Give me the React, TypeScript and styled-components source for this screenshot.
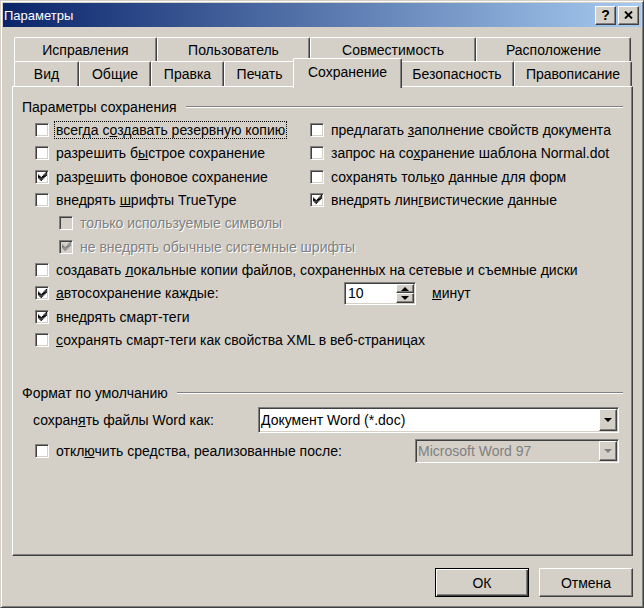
import { FC, ReactNode } from 'react'
import styled, { createGlobalStyle, css } from 'styled-components'

const face = '#d4d0c8'

const GlobalStyle = createGlobalStyle`
  html, body {
    margin: 0;
    padding: 0;
    background: ${face};
  }
  * {
    box-sizing: border-box;
  }
`

const raised = css`
  border: 1px solid;
  border-color: #fff #404040 #404040 #fff;
  box-shadow: inset -1px -1px #808080, inset 1px 1px ${face};
`

const sunken = css`
  border: 1px solid;
  border-color: #808080 #fff #fff #808080;
  box-shadow: inset 1px 1px #404040, inset -1px -1px ${face};
`

const Window = styled.div`
  width: 644px;
  height: 608px;
  background: ${face};
  border: 1px solid;
  border-color: ${face} #404040 #404040 ${face};
  box-shadow: inset 1px 1px #fff, inset -1px -1px #808080;
  padding: 2px;
  display: flex;
  flex-direction: column;
  font-family: 'Liberation Sans', Arial, sans-serif;
  font-size: 14px;
  color: #000;
`

const TitleBar = styled.div`
  height: 24px;
  flex: none;
  display: flex;
  align-items: center;
  padding: 0 2px 0 1px;
  gap: 2px;
  background: linear-gradient(to right, #0a246a, #a6caf0);
`

const Title = styled.div`
  flex: 1;
  color: #fff;
  font-size: 13px;
`

const CaptionButton = styled.div`
  width: 21px;
  height: 19px;
  ${raised};
  background: ${face};
  display: flex;
  align-items: center;
  justify-content: center;
  font-weight: bold;
  font-size: 14px;
`

const Body = styled.div`
  flex: 1;
  display: flex;
  flex-direction: column;
  padding: 10px 0 0 9px;
`

const TabRow = styled.div<{ $h: number }>`
  display: flex;
  height: ${({ $h }) => $h}px;
  margin-left: 2px;
  position: relative;
  z-index: 1;
`

const Tab = styled.div<{ $w: number; $active?: boolean }>`
  width: ${({ $w }) => $w}px;
  height: 100%;
  flex: none;
  display: flex;
  align-items: center;
  justify-content: center;
  background: ${face};
  border-top: 1px solid #fff;
  border-left: 1px solid #fff;
  border-right: 1px solid #404040;
  box-shadow: inset -1px 0 #808080;
  border-radius: 2px 2px 0 0;
  white-space: nowrap;
  ${({ $active }) =>
    $active &&
    css`
      position: relative;
      z-index: 2;
      margin: -3px -2px -2px;
      height: calc(100% + 5px);
      padding-bottom: 3px;
    `}
`

const Panel = styled.div`
  width: 621px;
  height: 470px;
  flex: none;
  border: 1px solid;
  border-color: #fff #404040 #404040 #fff;
  box-shadow: inset -1px -1px #808080;
  padding: 11px 9px 0 9px;
  display: flex;
  flex-direction: column;
`

const GroupHeader = styled.div<{ $top?: number }>`
  display: flex;
  align-items: center;
  height: 17px;
  gap: 9px;
  margin-top: ${({ $top }) => $top ?? 0}px;
  white-space: nowrap;
  &::after {
    content: '';
    flex: 1;
    border-top: 1px solid #808080;
    border-bottom: 1px solid #fff;
  }
`

const TwoCols = styled.div`
  display: grid;
  grid-template-columns: 275px 1fr;
  padding-left: 13px;
  margin-top: 3.3px;
`

const Rows = styled.div`
  display: flex;
  flex-direction: column;
  padding-left: 13px;
`

const Row = styled.div<{ $indent?: number }>`
  display: flex;
  align-items: center;
  height: 23.33px;
  padding-left: ${({ $indent }) => $indent ?? 0}px;
  white-space: nowrap;
`

const CheckWrap = styled.div<{ $w?: number }>`
  display: flex;
  align-items: center;
  gap: 5px;
  ${({ $w }) => $w && `width: ${$w}px; flex: none;`}
`

const Box = styled.span<{ $disabled?: boolean }>`
  width: 14px;
  height: 14px;
  flex: none;
  ${sunken};
  background: ${({ $disabled }) => ($disabled ? face : '#fff')};
  display: flex;
  align-items: center;
  justify-content: center;
`

const Label = styled.span<{ $disabled?: boolean; $focus?: boolean }>`
  padding: 0 1px;
  line-height: 16px;
  border: 1px dotted ${({ $focus }) => ($focus ? '#000' : 'transparent')};
  color: ${({ $disabled }) => ($disabled ? '#808080' : '#000')};
  text-shadow: ${({ $disabled }) => ($disabled ? '1px 1px #fff' : 'none')};
`

const Spin = styled.div`
  width: 72px;
  height: 23px;
  flex: none;
  display: flex;
  ${sunken};
  padding: 1px;
  background: #fff;
`

const SpinValue = styled.div`
  flex: 1;
  display: flex;
  align-items: center;
  padding-left: 2px;
`

const SpinButtons = styled.div`
  width: 18px;
  display: flex;
  flex-direction: column;
`

const SpinButton = styled.div`
  flex: 1;
  ${raised};
  background: ${face};
  display: flex;
  align-items: center;
  justify-content: center;
`

const Unit = styled.span`
  margin-left: 16px;
`

const FormatRow = styled.div<{ $top: number; $h: number; $pad: number }>`
  display: flex;
  align-items: center;
  height: ${({ $h }) => $h}px;
  margin-top: ${({ $top }) => $top}px;
  padding: 0 4px 0 ${({ $pad }) => $pad}px;
  white-space: nowrap;
`

const Combo = styled.div<{ $w: number; $disabled?: boolean }>`
  width: ${({ $w }) => $w}px;
  height: 100%;
  margin-left: auto;
  display: flex;
  ${sunken};
  padding: 1px;
  background: ${({ $disabled }) => ($disabled ? face : '#fff')};
`

const ComboText = styled.div<{ $disabled?: boolean }>`
  flex: 1;
  display: flex;
  align-items: center;
  padding-left: 1px;
  color: ${({ $disabled }) => ($disabled ? '#808080' : '#000')};
`

const DropButton = styled.div`
  width: 18px;
  ${raised};
  background: ${face};
  display: flex;
  align-items: center;
  justify-content: center;
`

const Footer = styled.div`
  width: 621px;
  display: flex;
  justify-content: flex-end;
  gap: 10px;
  margin-top: 12px;
`

const Button = styled.div<{ $default?: boolean }>`
  width: 94px;
  height: 29px;
  display: flex;
  align-items: center;
  justify-content: center;
  background: ${face};
  ${({ $default }) =>
    $default
      ? css`
          border: 1px solid #000;
          box-shadow: inset 1px 1px #fff, inset -1px -1px #404040, inset -2px -2px #808080;
        `
      : raised}
`

const CheckMark: FC<{ color: string }> = ({ color }) => (
  <svg width="9" height="9" viewBox="0 0 7 7">
    <g fill={color}>
      <rect x="6" y="0" width="1" height="1" />
      <rect x="5" y="1" width="2" height="1" />
      <rect x="0" y="2" width="1" height="1" />
      <rect x="4" y="2" width="3" height="1" />
      <rect x="0" y="3" width="2" height="1" />
      <rect x="3" y="3" width="3" height="1" />
      <rect x="0" y="4" width="5" height="1" />
      <rect x="1" y="5" width="3" height="1" />
      <rect x="2" y="6" width="1" height="1" />
    </g>
  </svg>
)

const Arrow: FC<{ up?: boolean; color?: string }> = ({ up, color = '#000' }) => (
  <svg width="8" height="4" viewBox="0 0 8 4">
    <path d={up ? 'M0 4 L4 0 L8 4 Z' : 'M0 0 L8 0 L4 4 Z'} fill={color} />
  </svg>
)

const Check: FC<{
  checked?: boolean
  disabled?: boolean
  focus?: boolean
  width?: number
  children: ReactNode
}> = ({ checked, disabled, focus, width, children }) => (
  <CheckWrap $w={width}>
    <Box $disabled={disabled}>{checked && <CheckMark color={disabled ? '#808080' : '#000'} />}</Box>
    <Label $disabled={disabled} $focus={focus}>
      {children}
    </Label>
  </CheckWrap>
)

const backTabs = [
  { name: 'Исправления', w: 143 },
  { name: 'Пользователь', w: 153 },
  { name: 'Совместимость', w: 166 },
  { name: 'Расположение', w: 155 },
]

const frontTabs = [
  { name: 'Вид', w: 65 },
  { name: 'Общие', w: 72 },
  { name: 'Правка', w: 73 },
  { name: 'Печать', w: 71 },
  { name: 'Сохранение', w: 109, active: true },
  { name: 'Безопасность', w: 114 },
  { name: 'Правописание', w: 118 },
]

const App: FC = () => {
  return (
    <Window>
      <GlobalStyle />
      <TitleBar>
        <Title>Параметры</Title>
        <CaptionButton>?</CaptionButton>
        <CaptionButton>
          <svg width="9" height="8" viewBox="0 0 9 8">
            <path d="M1 0.5 L8 7.5 M8 0.5 L1 7.5" stroke="#000" strokeWidth="1.8" />
          </svg>
        </CaptionButton>
      </TitleBar>

      <Body>
        <TabRow $h={24}>
          {backTabs.map((t) => (
            <Tab key={t.name} $w={t.w}>
              {t.name}
            </Tab>
          ))}
        </TabRow>
        <TabRow $h={25}>
          {frontTabs.map((t) => (
            <Tab key={t.name} $w={t.w} $active={t.active}>
              {t.name}
            </Tab>
          ))}
        </TabRow>

        <Panel>
          <GroupHeader>Параметры сохранения</GroupHeader>
          <TwoCols>
            <Row>
              <Check focus>
                всегда с<u>о</u>здавать резервную копию
              </Check>
            </Row>
            <Row>
              <Check>
                предлагать <u>з</u>аполнение свойств документа
              </Check>
            </Row>
            <Row>
              <Check>
                разрешить б<u>ы</u>строе сохранение
              </Check>
            </Row>
            <Row>
              <Check>
                запрос на со<u>х</u>ранение шаблона Normal.dot
              </Check>
            </Row>
            <Row>
              <Check checked>
                разр<u>е</u>шить фоновое сохранение
              </Check>
            </Row>
            <Row>
              <Check>
                сохранять толь<u>к</u>о данные для форм
              </Check>
            </Row>
            <Row>
              <Check>
                внедрять <u>ш</u>рифты TrueType
              </Check>
            </Row>
            <Row>
              <Check checked>
                внедрять лин<u>г</u>вистические данные
              </Check>
            </Row>
          </TwoCols>
          <Rows>
            <Row $indent={24}>
              <Check disabled>только используемые символы</Check>
            </Row>
            <Row $indent={24}>
              <Check disabled checked>
                не внедрять обычные системные шрифты
              </Check>
            </Row>
            <Row>
              <Check>
                создавать <u>л</u>окальные копии файлов, сохраненных на сетевые и съемные диски
              </Check>
            </Row>
            <Row>
              <Check checked width={309}>
                <u>а</u>втосохранение каждые:
              </Check>
              <Spin>
                <SpinValue>10</SpinValue>
                <SpinButtons>
                  <SpinButton>
                    <Arrow up />
                  </SpinButton>
                  <SpinButton>
                    <Arrow />
                  </SpinButton>
                </SpinButtons>
              </Spin>
              <Unit>
                <u>м</u>инут
              </Unit>
            </Row>
            <Row>
              <Check checked>внедрять смарт-теги</Check>
            </Row>
            <Row>
              <Check>
                <u>с</u>охранять смарт-теги как свойства XML в веб-страницах
              </Check>
            </Row>
          </Rows>

          <GroupHeader $top={33}>Формат по умолчанию</GroupHeader>
          <FormatRow $top={5.5} $h={26} $pad={11}>
            <span>
              сохран<u>я</u>ть файлы Word как:
            </span>
            <Combo $w={361}>
              <ComboText>Документ Word (*.doc)</ComboText>
              <DropButton>
                <Arrow />
              </DropButton>
            </Combo>
          </FormatRow>
          <FormatRow $top={6} $h={24} $pad={13}>
            <Check>
              откл<u>ю</u>чить средства, реализованные после:
            </Check>
            <Combo $w={204} $disabled>
              <ComboText $disabled>Microsoft Word 97</ComboText>
              <DropButton>
                <Arrow color="#808080" />
              </DropButton>
            </Combo>
          </FormatRow>
        </Panel>

        <Footer>
          <Button $default>ОК</Button>
          <Button>Отмена</Button>
        </Footer>
      </Body>
    </Window>
  )
}

export default App
